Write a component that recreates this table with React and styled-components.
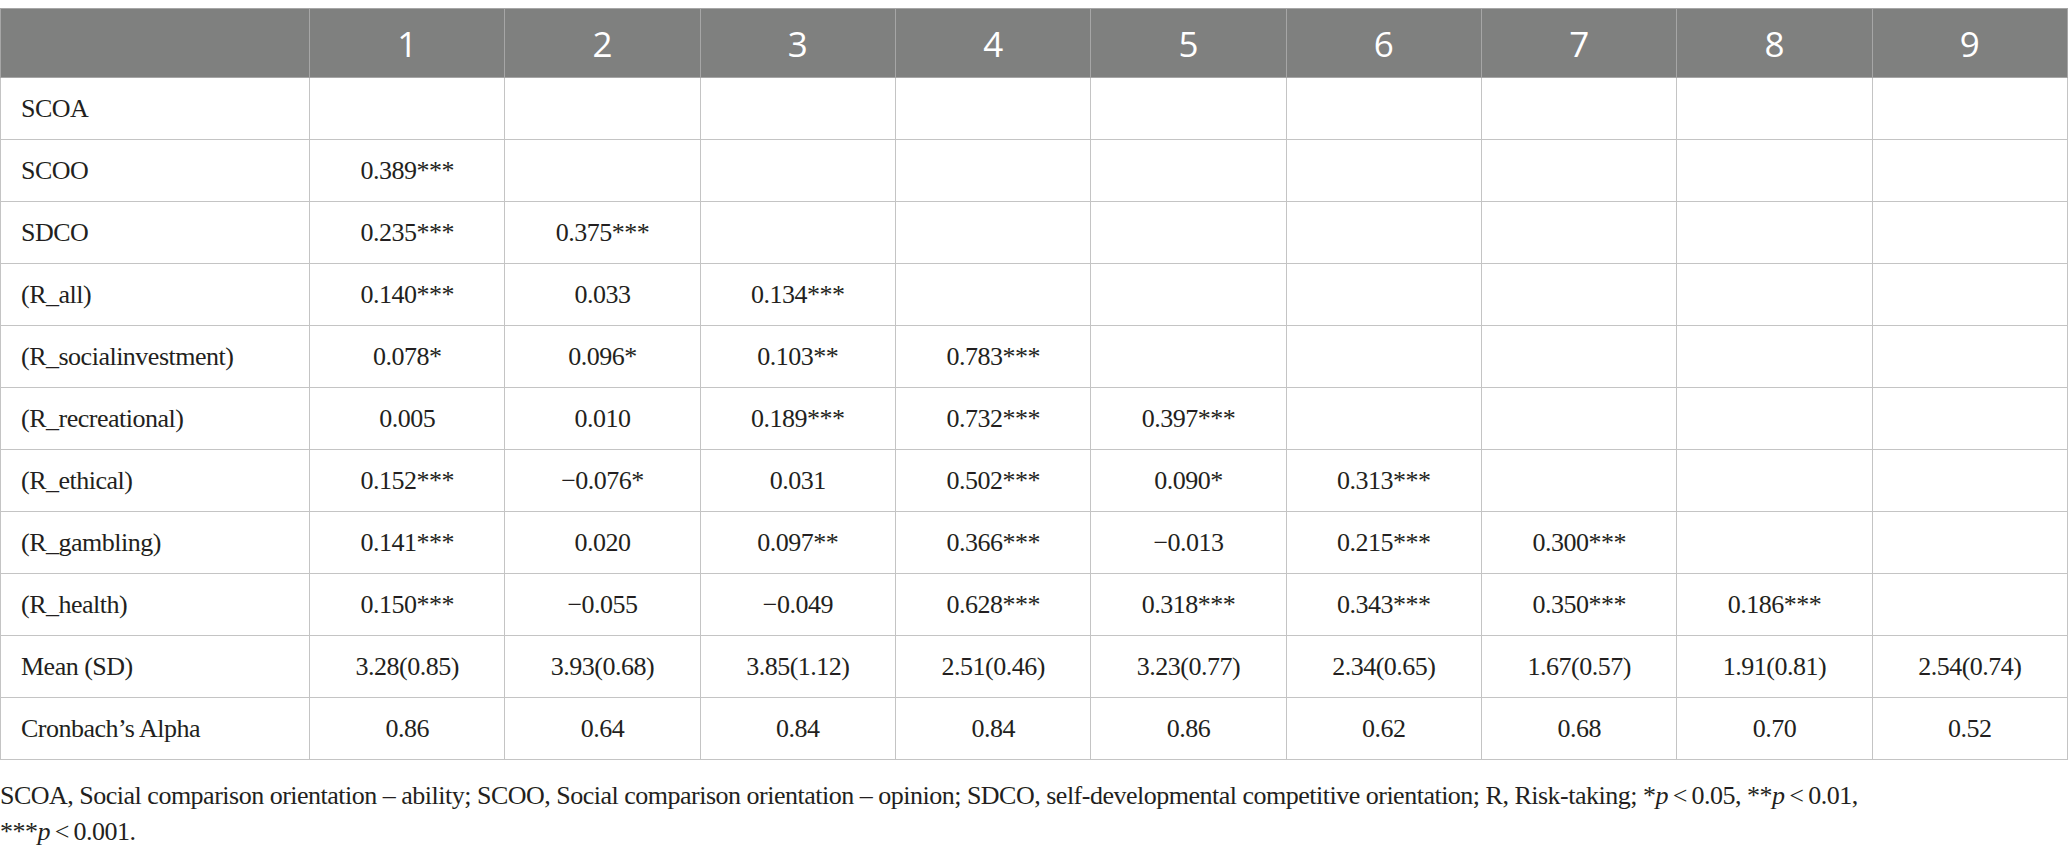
import React from 'react'
import styled, { createGlobalStyle } from 'styled-components'

const GlobalStyle = createGlobalStyle`
    html, body {
        margin: 0;
        padding: 0;
        background: #ffffff;
    }
    body {
        font-family: 'Liberation Serif', 'Times New Roman', serif;
        color: #231f20;
    }
`;

const M = '\u2212'

const rows = [
    { label: 'SCOA', values: [] },
    { label: 'SCOO', values: ['0.389***'] },
    { label: 'SDCO', values: ['0.235***', '0.375***'] },
    { label: '(R_all)', values: ['0.140***', '0.033', '0.134***'] },
    { label: '(R_socialinvestment)', values: ['0.078*', '0.096*', '0.103**', '0.783***'] },
    { label: '(R_recreational)', values: ['0.005', '0.010', '0.189***', '0.732***', '0.397***'] },
    { label: '(R_ethical)', values: ['0.152***', M + '0.076*', '0.031', '0.502***', '0.090*', '0.313***'] },
    { label: '(R_gambling)', values: ['0.141***', '0.020', '0.097**', '0.366***', M + '0.013', '0.215***', '0.300***'] },
    { label: '(R_health)', values: ['0.150***', M + '0.055', M + '0.049', '0.628***', '0.318***', '0.343***', '0.350***', '0.186***'] },
    { label: 'Mean (SD)', values: ['3.28(0.85)', '3.93(0.68)', '3.85(1.12)', '2.51(0.46)', '3.23(0.77)', '2.34(0.65)', '1.67(0.57)', '1.91(0.81)', '2.54(0.74)'] },
    { label: 'Cronbach\u2019s Alpha', values: ['0.86', '0.64', '0.84', '0.84', '0.86', '0.62', '0.68', '0.70', '0.52'] },
]

const cols = [1, 2, 3, 4, 5, 6, 7, 8, 9]

const PValue = ({ stars, value }) => (
    <Sig>{stars}<i>p</i>{'\u202F<\u202F'}{value}</Sig>
)

export default function App() {
    return (
        <Page>
            <GlobalStyle />
            <Table>
                <colgroup>
                    <col style={{ width: 309 }} />
                    {cols.map((c) => <col key={c} />)}
                </colgroup>
                <thead>
                    <tr>
                        <HeadCell />
                        {cols.map((c) => <HeadCell key={c}>{c}</HeadCell>)}
                    </tr>
                </thead>
                <tbody>
                    {rows.map((r) => (
                        <tr key={r.label}>
                            <LabelCell>{r.label}</LabelCell>
                            {cols.map((c, i) => <Cell key={c}>{r.values[i] || ''}</Cell>)}
                        </tr>
                    ))}
                </tbody>
            </Table>
            <Note>
                SCOA, Social comparison orientation – ability; SCOO, Social comparison orientation – opinion; SDCO, self-developmental competitive orientation; R, Risk-taking; <PValue stars="*" value="0.05" />, <PValue stars="**" value="0.01" />, <PValue stars="***" value="0.001" />.
            </Note>
        </Page>
    )
}

const Page = styled.div`
    width: 2068px;
    padding-top: 8px;
`;

const Table = styled.table`
    width: 2068px;
    table-layout: fixed;
    border-collapse: collapse;
    border: 1px solid #c4c4c4;
`;

const HeadCell = styled.th`
    height: 68px;
    padding: 0;
    background-color: #7f807f;
    border: 1px solid #a6a6a6;
    color: #ffffff;
    font-family: 'Open Sans', 'Noto Sans', sans-serif;
    font-weight: 400;
    font-size: 35px;
    text-align: center;
    vertical-align: middle;
`;

const Cell = styled.td`
    height: 61px;
    padding: 0 8px;
    border: 1px solid #c4c4c4;
    font-size: 26px;
    letter-spacing: -0.5px;
    text-align: center;
    vertical-align: middle;
    white-space: nowrap;
`;

const LabelCell = styled(Cell)`
    text-align: left;
    padding-left: 20px;
`;

const Note = styled.p`
    max-width: 1900px;
    margin: 18px 0 0;
    font-size: 26px;
    letter-spacing: -0.5px;
    line-height: 36px;
    color: #231f20;
`;

const Sig = styled.span`
    white-space: nowrap;
`;
